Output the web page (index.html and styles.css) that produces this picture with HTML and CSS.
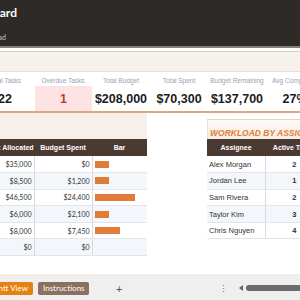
FILE: index.html
```html
<!DOCTYPE html>
<html lang="en">
<head>
  <meta charset="UTF-8">
  <title>Project Dashboard</title>
  <link rel="stylesheet" href="styles.css">
</head>
<body>

<header class="topbar">
  <div class="title"><span>Project Budget Dashboard</span></div>
  <div class="subtitle"><span>Budget and task status for the project lead</span></div>
</header>
<div class="rule"></div>
<div class="band"></div>

<!-- KPI strip -->
<section class="kpis">
  <div class="kpi"><span class="kpi-label">Total Tasks</span><span class="kpi-value">22</span></div>
  <div class="kpi overdue"><span class="kpi-label">Overdue Tasks</span><span class="kpi-value">1</span></div>
  <div class="kpi"><span class="kpi-label">Total Budget</span><span class="kpi-value">$208,000</span></div>
  <div class="kpi"><span class="kpi-label">Total Spent</span><span class="kpi-value">$70,300</span></div>
  <div class="kpi"><span class="kpi-label">Budget Remaining</span><span class="kpi-value">$137,700</span></div>
  <div class="kpi"><span class="kpi-label">Avg Completion</span><span class="kpi-value">27%</span></div>
</section>

<section class="sheet">
  <div class="budget">
    <div class="budget-cap"></div>
    <table class="grid budget-table">
      <colgroup><col class="col-58"><col class="col-58"><col class="col-55"></colgroup>
      <thead>
        <tr><th>Budget Allocated</th><th>Budget Spent</th><th>Bar</th></tr>
      </thead>
      <tbody>
        <tr><td>$35,000</td><td>$0</td><td class="bar-cell"><span class="bar" style="width:14px"></span></td></tr>
        <tr><td>$8,500</td><td>$1,200</td><td class="bar-cell"><span class="bar" style="width:14px"></span></td></tr>
        <tr><td>$46,500</td><td>$24,400</td><td class="bar-cell"><span class="bar" style="width:40px"></span></td></tr>
        <tr><td>$6,000</td><td>$2,100</td><td class="bar-cell"><span class="bar" style="width:14px"></span></td></tr>
        <tr><td>$8,000</td><td>$7,450</td><td class="bar-cell"><span class="bar" style="width:25px"></span></td></tr>
        <tr><td>$0</td><td>$0</td><td class="bar-cell"></td></tr>
      </tbody>
    </table>
  </div>

  <div class="workload">
    <div class="workload-cap"><h2>WORKLOAD BY ASSIGNEE</h2></div>
    <table class="grid workload-table">
      <colgroup><col class="col-58"><col class="col-58"></colgroup>
      <thead>
        <tr><th>Assignee</th><th>Active Tasks</th></tr>
      </thead>
      <tbody>
        <tr><td>Alex Morgan</td><td>2</td></tr>
        <tr><td>Jordan Lee</td><td>1</td></tr>
        <tr><td>Sam Rivera</td><td>2</td></tr>
        <tr><td>Taylor Kim</td><td>3</td></tr>
        <tr><td>Chris Nguyen</td><td>4</td></tr>
      </tbody>
    </table>
  </div>
</section>

<div class="sheet-end"></div>
<footer class="tabs">
  <div class="tab-clip"><span class="tab tab-gantt">Gantt View</span></div>
  <span class="tab tab-help">Instructions</span>
  <span class="tab-add">+</span>
  <div class="scroll">
    <span class="dots">&#8942;</span>
    <span class="arrow"></span>
    <span class="track"></span>
  </div>
</footer>

</body>
</html>
```

FILE: styles.css
```css
* {
  box-sizing: border-box;
  margin: 0;
  padding: 0;
}
body {
  width: 300px;
  height: 300px;
  overflow: hidden;
  background: #fff;
  font-family: 'Liberation Sans', Arial, sans-serif;
  color: #333;
}

/* header */
.topbar {
  height: 46px;
  background: #2e2a27;
  padding-top: 6px;
}
.title, .subtitle {
  display: flex;
  justify-content: flex-end;
  white-space: nowrap;
}
.title {
  width: 17px;
  font: bold 12px/14px Lato, sans-serif;
  color: #fff;
}
.subtitle {
  width: 6px;
  margin-top: 13px;
  font: 7px/9px Lato, sans-serif;
  color: #c9c3bc;
}
.rule {
  height: 6px;
  background: #fff;
  border-top: 2px solid #86807a;
  border-bottom: 1px solid #d3cec8;
}
.band {
  height: 20px;
  background: #f7f1eb;
  border-bottom: 1px solid #e9e1d9;
}

/* kpis */
.kpis {
  display: grid;
  grid-template-columns: repeat(6, 58px);
  margin-left: -24px;
  height: 41px;
  padding-top: 4px;
  border-bottom: 2px solid #dda782;
}
.kpi {
  display: flex;
  flex-direction: column;
  align-items: center;
}
.kpi-label {
  font-size: 6.5px;
  line-height: 10px;
  color: #97a4b3;
  white-space: nowrap;
}
.kpi-value {
  height: 25px;
  display: flex;
  align-items: center;
  font-size: 12.5px;
  font-weight: bold;
  color: #1c1c1c;
  white-space: nowrap;
}
.overdue .kpi-value {
  align-self: stretch;
  justify-content: center;
  margin-left: 1px;
  background: #fde3e3;
  color: #c0392b;
}

/* tables */
.sheet {
  display: flex;
  align-items: flex-start;
  gap: 60px;
  height: 161px;
  margin-left: -24px;
}
.budget, .workload {
  flex: none;
}
.budget-cap {
  height: 26px;
  background: #f6f0ea;
}
.grid {
  border-collapse: collapse;
  table-layout: fixed;
}
.col-58 { width: 58px; }
.col-55 { width: 55px; }
.grid th {
  height: 17px;
  padding: 0;
  background: #4a3a31;
  color: #fff;
  font-size: 7px;
  font-weight: bold;
  text-align: center;
  white-space: nowrap;
  overflow: hidden;
}
.grid td {
  height: 16.6px;
  padding: 0 2px;
  border-bottom: 1px solid #e2e5ea;
  border-right: 1px solid #d6dae0;
  white-space: nowrap;
  overflow: hidden;
}
.grid tbody tr:nth-child(even) td {
  background: #f3f6fa;
}
.budget-table {
  width: 171px;
}
.budget-table td {
  font: 7px Lato, sans-serif;
  text-align: right;
  color: #333;
}
.budget-table td.bar-cell {
  text-align: left;
  border-right: none;
}
.bar {
  display: block;
  height: 7px;
  background: #e07b39;
}

.workload {
  margin-top: 6px;
  width: 116px;
}
.workload-cap {
  height: 20px;
  padding: 8px 0 0 2px;
  background: linear-gradient(#fdfaf7, #f5ece3);
  border-top: 1px solid #ead3bf;
  border-left: 1px solid #eadfd4;
}
.workload-cap h2 {
  font-size: 8.5px;
  line-height: 11px;
  font-style: italic;
  font-weight: bold;
  color: #e27d35;
  white-space: nowrap;
}
.workload-table {
  width: 116px;
}
.workload-table td {
  font-size: 7.5px;
  color: #333;
}
.workload-table td:last-child {
  text-align: center;
  font-weight: bold;
  border-right: none;
}

/* sheet tabs */
.sheet-end {
  height: 2px;
  background: #f5ebe3;
}
.tabs {
  height: 24px;
  display: flex;
  align-items: center;
  background: #efefef;
  font-family: Lato, sans-serif;
}
.tab-clip {
  width: 33px;
  display: flex;
  justify-content: flex-end;
  white-space: nowrap;
}
.tab {
  height: 13px;
  padding: 0 5px;
  border-radius: 2px;
  font-size: 8px;
  line-height: 13px;
  color: #fff;
  white-space: nowrap;
}
.tab-gantt {
  background: #e5820f;
}
.tab-help {
  margin-left: 5px;
  width: 51px;
  text-align: center;
  background: #8b6f60;
}
.tab-add {
  margin-left: 27px;
  font-size: 11px;
  color: #555;
}
.scroll {
  margin-left: auto;
  display: flex;
  align-items: center;
}
.dots {
  font-size: 9px;
  color: #666;
}
.arrow {
  margin-left: 11px;
  width: 0;
  height: 0;
  border-top: 3px solid transparent;
  border-bottom: 3px solid transparent;
  border-right: 4px solid #666;
}
.track {
  margin-left: 3px;
  width: 54px;
  height: 6px;
  border-radius: 3px 0 0 3px;
  background: #6b6b6b;
}
```
